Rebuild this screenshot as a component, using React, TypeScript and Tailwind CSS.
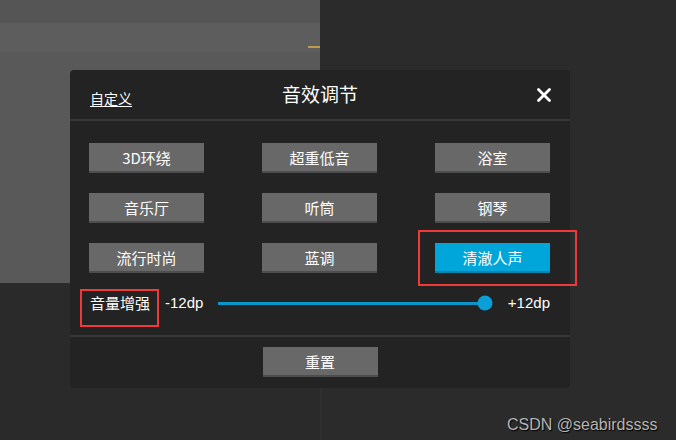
import { X } from 'lucide-react'

const presets = ['3D环绕', '超重低音', '浴室', '音乐厅', '听筒', '钢琴', '流行时尚', '蓝调', '清澈人声']
const active = '清澈人声'

const cjk = { fontFamily: '"Microsoft YaHei", "Noto Sans CJK SC", "Liberation Sans", sans-serif' }
const latin = { fontFamily: '"Liberation Sans", Arial, sans-serif' }

/**
 * Preset button - gray, or blue when selected
 */
function PresetButton({ label, selected }: { label: string; selected?: boolean }) {
  return (
    <button
      className={
        selected
          ? 'h-[30px] w-[115px] bg-[#00a5d9] border-b-2 border-[#0083ad] text-[15px] text-white leading-none'
          : 'h-[30px] w-[115px] bg-[#686868] border-b-2 border-[#4d4d4d] text-[15px] text-white leading-none'
      }
      style={cjk}
    >
      {label}
    </button>
  )
}

export default function App() {
  // slider value from -12 to +12
  const value = 12
  const pct = ((value + 12) / 24) * 100

  return (
    <div className="relative w-[676px] h-[440px] overflow-hidden bg-[#2a2a2a] flex">
      {/* Background page */}
      <div className="w-[320px] flex flex-col">
        <div className="h-[283px] flex flex-col bg-[#595959]">
          <div className="h-[23px] bg-[#555555]" />
          <div className="h-[29px] bg-[#5d5d5d]" />
          <div className="flex justify-end mt-[-6px]">
            <div className="w-[12px] h-[2px] bg-[#b99c4c]" />
          </div>
        </div>
      </div>
      <div className="flex flex-col w-[2px]">
        <div className="h-[283px] bg-[#2b2b2b]" />
        <div className="flex-1 bg-[#2f2f2f]" />
      </div>
      <div className="flex-1 bg-[#2b2b2b]" />

      {/* Dialog */}
      <div className="absolute left-[70px] top-[70px] w-[500px] h-[318px] rounded-[4px] bg-[#232323] flex flex-col">
        <div className="relative h-[51px] flex items-center justify-center border-b-2 border-[#383838]">
          <span className="absolute left-[20px] top-[18px] text-[14px] text-white underline underline-offset-2" style={cjk}>
            自定义
          </span>
          <span className="text-[19px] text-white" style={cjk}>音效调节</span>
          <X className="absolute right-[15px] top-[14px] text-white" size={22} strokeWidth={3} />
        </div>

        <div className="grid grid-cols-[115px_115px_115px] gap-x-[58px] gap-y-[20px] pl-[19px] pt-[22px]">
          {presets.map((p) => (
            <PresetButton key={p} label={p} selected={p === active} />
          ))}
        </div>

        <div className="h-[40px] mt-[10px] flex items-center pl-[20px] pr-[20px] text-white text-[15px]">
          <span className="w-[75px]" style={cjk}>音量增强</span>
          <span className="w-[53px]" style={latin}>-12dp</span>
          <div className="relative w-[272px] h-[3px] bg-[#0a96c8]">
            <div
              className="absolute top-1/2 w-[15px] h-[15px] rounded-full bg-[#0a9fd6] -translate-x-1/2 -translate-y-1/2"
              style={{ left: 'calc(' + pct + '% - 5px)' }}
            />
          </div>
          <span className="ml-[18px]" style={latin}>+12dp</span>
        </div>

        <div className="mt-[12px] border-t-2 border-[#383838] flex justify-center pt-[10px]">
          <button
            className="h-[30px] w-[115px] bg-[#686868] border-b-2 border-[#4d4d4d] text-[15px] text-white leading-none"
            style={cjk}
          >
            重置
          </button>
        </div>
      </div>

      {/* Annotation boxes */}
      <div className="absolute left-[418px] top-[230px] w-[159px] h-[56px] border-2 border-[#f03a3a]" />
      <div className="absolute left-[80px] top-[289px] w-[79px] h-[38px] border-2 border-[#f03a3a]" />

      {/* Watermark */}
      <span
        className="absolute left-[507px] top-[413px] text-[16px] text-[#b4b4b4] [text-shadow:1px_1px_1px_#000]"
        style={latin}
      >
        CSDN @seabirdssss
      </span>
    </div>
  )
}
